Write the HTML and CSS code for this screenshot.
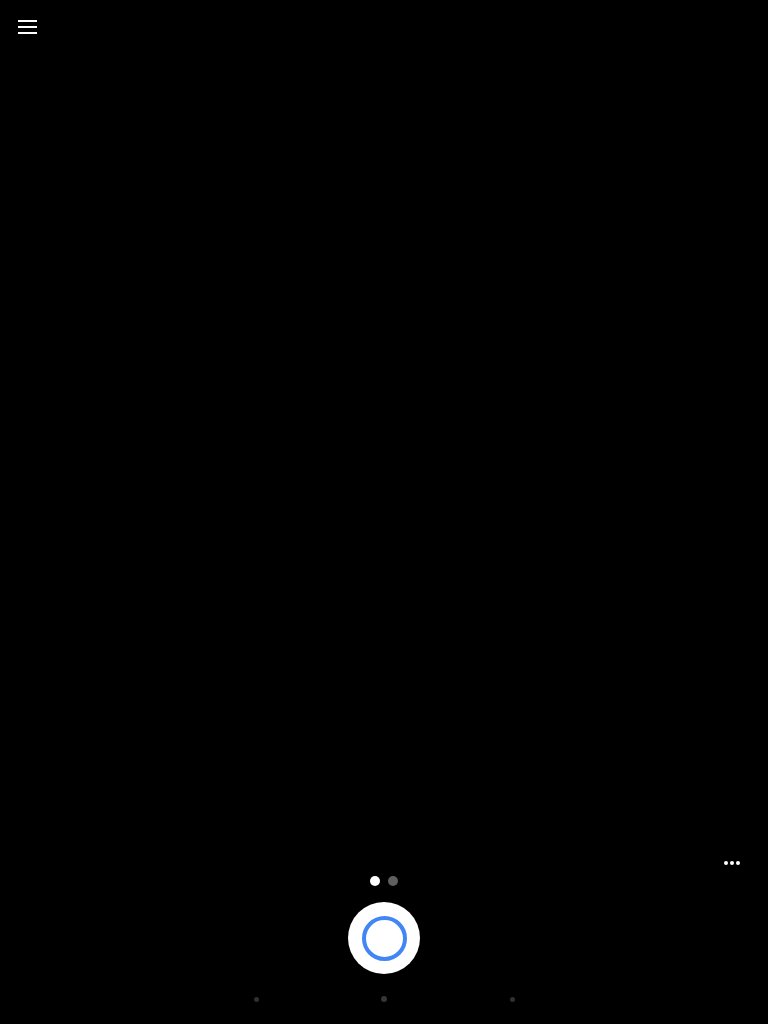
FILE: index.html
```html
<!DOCTYPE html>
<html lang="en">
<head>
<meta charset="utf-8">
<title>Assistant</title>
<link rel="stylesheet" href="styles.css">
</head>
<body>
<div class="app">
  <header class="topbar">
    <button class="menu-btn" aria-label="Menu">
      <svg width="19" height="14" viewBox="0 0 19 14"><path d="M0 1H19M0 7H19M0 13H19" stroke="#fff" stroke-width="2"/></svg>
    </button>
  </header>
  <main class="stage"></main>
  <footer class="controls">
    <div class="more-row">
      <span class="more"><i></i><i></i><i></i></span>
    </div>
    <div class="pager">
      <span class="pdot active"></span>
      <span class="pdot"></span>
    </div>
    <div class="shutter-row">
      <button class="shutter" aria-label="Start"><span class="ring"></span></button>
    </div>
    <nav class="nav">
      <span class="ndot"></span>
      <span class="ndot mid"></span>
      <span class="ndot"></span>
    </nav>
  </footer>
</div>
</body>
</html>
```

FILE: styles.css
```css
html, body {
  margin: 0;
  padding: 0;
  background: #000;
  font-family: Roboto, "Liberation Sans", sans-serif;
}
.app {
  height: 1024px;
  display: flex;
  flex-direction: column;
  background: #000;
}
.topbar {
  padding: 20px 0 0 18px;
}
.menu-btn {
  display: block;
  padding: 0;
  border: 0;
  background: none;
  width: 19px;
  height: 14px;
}
.menu-btn svg { display: block; }
.stage { flex: 1; }
.controls {
  display: flex;
  flex-direction: column;
  padding-bottom: 22px;
}
.more-row {
  display: flex;
  justify-content: flex-end;
  padding-right: 28px;
  height: 4px;
}
.more {
  display: flex;
  gap: 2px;
}
.more i {
  width: 4px;
  height: 4px;
  border-radius: 50%;
  background: #fff;
}
.pager {
  margin-top: 11px;
  display: flex;
  justify-content: center;
  gap: 8px;
}
.pdot {
  width: 10px;
  height: 10px;
  border-radius: 50%;
  background: #5f5f5f;
}
.pdot.active { background: #fff; }
.shutter-row {
  margin-top: 16px;
  display: flex;
  justify-content: center;
}
.shutter {
  width: 72px;
  height: 72px;
  border-radius: 50%;
  background: #fff;
  border: 0;
  padding: 0;
  display: flex;
  align-items: center;
  justify-content: center;
}
.ring {
  width: 37px;
  height: 37px;
  border-radius: 50%;
  border: 4px solid #4285f4;
}
.nav {
  margin-top: 22px;
  height: 6px;
  display: flex;
  justify-content: center;
  align-items: center;
  gap: 123px;
}
.ndot {
  width: 5px;
  height: 5px;
  border-radius: 50%;
  background: #303030;
}
.ndot.mid {
  width: 6px;
  height: 6px;
  margin: 0 -0.5px;
  background: #363636;
}
```
